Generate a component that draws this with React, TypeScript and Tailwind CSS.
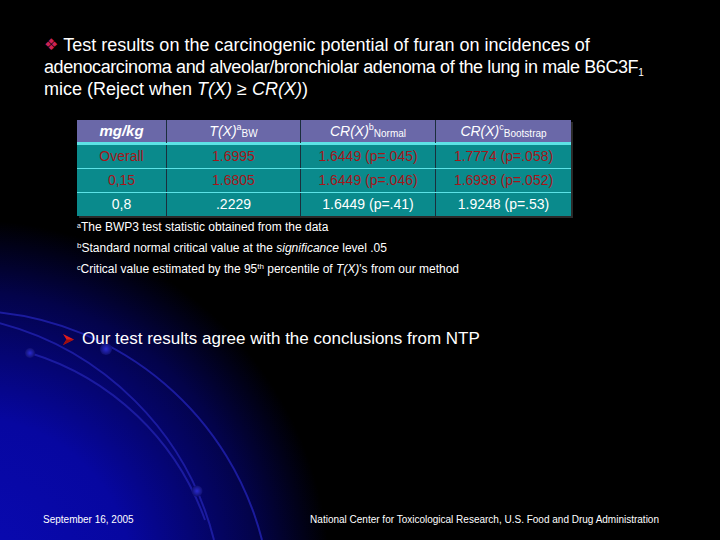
import React from "react";

const font = { fontFamily: '"Liberation Sans", Arial, sans-serif' };

const rows = [
  { dose: "Overall", t: "1.6995", n: "1.6449 (p=.045)", b: "1.7774 (p=.058)", red: true },
  { dose: "0,15", t: "1.6805", n: "1.6449 (p=.046)", b: "1.6938 (p=.052)", red: true },
  { dose: "0,8", t: ".2229", n: "1.6449 (p=.41)", b: "1.9248 (p=.53)", red: false },
];

function Backdrop() {
  return (
    <svg className="absolute inset-0" width="720" height="540" viewBox="0 0 720 540">
      <defs>
        <radialGradient id="glow" cx="-30" cy="580" r="360" gradientUnits="userSpaceOnUse">
          <stop offset="0" stopColor="#0a0ab4" />
          <stop offset="0.45" stopColor="#0707a0" />
          <stop offset="0.8" stopColor="#03034a" />
          <stop offset="1" stopColor="#000000" />
        </radialGradient>
        <radialGradient id="dot">
          <stop offset="0" stopColor="#2a2ad0" />
          <stop offset="1" stopColor="#101070" />
        </radialGradient>
      </defs>
      <rect width="720" height="540" fill="#000" />
      <rect width="720" height="540" fill="url(#glow)" />
      <g fill="none" stroke="#1e1ea6" strokeWidth="2" opacity="0.9">
        <path d="M -5 312 A 305 305 0 0 1 262 540" />
        <path d="M -5 322 A 300 300 0 0 1 214 540" />
        <path d="M 30 353 A 270 270 0 0 1 205 520" />
      </g>
      <circle cx="30" cy="353" r="5" fill="url(#dot)" />
      <circle cx="106" cy="349" r="6" fill="url(#dot)" />
      <circle cx="197" cy="491" r="5.5" fill="url(#dot)" />
    </svg>
  );
}

function Cell({ children, className = "" }: { children: React.ReactNode; className?: string }) {
  return (
    <div className={`flex items-center justify-center text-[14px] border-r border-[#1b2e3c] last:border-r-0 ${className}`}>
      {children}
    </div>
  );
}

export default function App() {
  return (
    <div className="relative w-[720px] h-[540px] overflow-hidden bg-black text-white" style={font}>
      <Backdrop />
      <div className="relative flex flex-col h-full">
        {/* title */}
        <div className="pt-[34px] pl-[44px] text-[18px] leading-[22px]">
          <div className="flex items-center">
            <span className="text-[#cc2255] text-[16px] mr-[5px] leading-[22px]" style={{ fontFamily: '"DejaVu Sans", sans-serif' }}>❖</span>
            <span>Test results on the carcinogenic potential of furan on incidences of</span>
          </div>
          <div className="tracking-[-0.4px]">
            adenocarcinoma and alveolar/bronchiolar adenoma of the lung in male B6C3F
            <sub className="text-[10px]">1</sub>
          </div>
          <div>
            mice (Reject when <i>T(X)</i> ≥ <i>CR(X)</i>)
          </div>
        </div>

        {/* table */}
        <div className="ml-[77px] mt-[20px] w-[494px] shadow-[2px_2px_0_#2a2a2a]">
          <div className="grid grid-cols-[90px_134px_135px_135px] h-[22px] bg-[#6a68a8]">
            <Cell className="font-bold italic text-[15px]">mg/kg</Cell>
            <Cell>
              <i>T(X)</i>
              <sup className="text-[9px]">a</sup>
              <sub className="text-[10px]">BW</sub>
            </Cell>
            <Cell>
              <i>CR(X)</i>
              <sup className="text-[9px]">b</sup>
              <sub className="text-[10px]">Normal</sub>
            </Cell>
            <Cell>
              <i>CR(X)</i>
              <sup className="text-[9px]">c</sup>
              <sub className="text-[10px]">Bootstrap</sub>
            </Cell>
          </div>
          <div className="h-[3px] bg-[#5de2e6]" />
          {rows.map((r, i) => (
            <div key={r.dose}>
              {i > 0 && <div className="h-px bg-[#5de2e6]" />}
              <div
                className={`grid grid-cols-[90px_134px_135px_135px] h-[23px] bg-[#0a8a8c] ${
                  r.red ? "text-[#a5161a]" : "text-white"
                }`}
              >
                <Cell>{r.dose}</Cell>
                <Cell>{r.t}</Cell>
                <Cell>{r.n}</Cell>
                <Cell>{r.b}</Cell>
              </div>
            </div>
          ))}
        </div>

        {/* footnotes */}
        <div className="ml-[77px] mt-[1px] text-[12px] leading-[21px]">
          <div>
            <sup className="text-[7px]">a</sup>The BWP3 test statistic obtained from the data
          </div>
          <div>
            <sup className="text-[8px]">b</sup>Standard normal critical value at the <i>significance</i> level .05
          </div>
          <div>
            <sup className="text-[7px]">c</sup>Critical value estimated by the 95<sup className="text-[8px]">th</sup> percentile of{" "}
            <i>T(X)</i>'s from our method
          </div>
        </div>

        {/* conclusion */}
        <div className="ml-[63px] mt-[48px] text-[17px] leading-[22px] flex items-center">
          <svg width="11" height="11" viewBox="0 0 11 11" className="mr-[8px] mt-[1px]">
            <polygon points="0,0 11,5.5 0,11 3.5,5.5" fill="#e11c1c" />
            <polygon points="0,11 11,5.5 3.5,5.5" fill="#9c0f0f" />
          </svg>
          Our test results agree with the conclusions from NTP
        </div>

        {/* footer */}
        <div className="mt-auto flex pl-[43px] pr-[61px] pb-[13px] text-[10px] leading-[14px]">
          <span>September 16, 2005</span>
          <span className="ml-auto">National Center for Toxicological Research, U.S. Food and Drug Administration</span>
        </div>
      </div>
    </div>
  );
}
